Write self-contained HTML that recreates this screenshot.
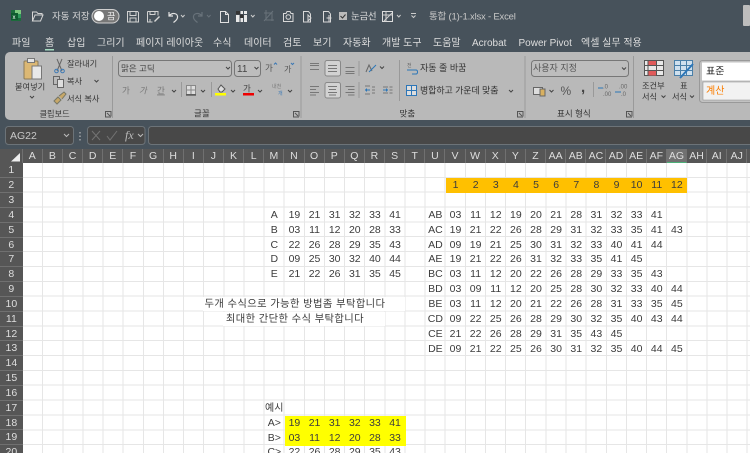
<!DOCTYPE html>
<html lang="ko"><head><meta charset="utf-8"><title>통합 (1)-1.xlsx - Excel</title>
<style>
html,body{margin:0;padding:0;width:750px;height:453px;overflow:hidden;background:#fff}
body{position:relative;font-family:"Liberation Sans","Noto Sans CJK KR",sans-serif}
#top{position:absolute;left:0;top:0;width:750px;height:149px;background:#47525b}
svg{position:absolute;left:0;top:0}
svg text{font-family:"Liberation Sans","Noto Sans CJK KR",sans-serif}
#grid{position:absolute;left:22.7px;top:163.3px;width:728px;height:290px;background-color:#fff;
background-image:repeating-linear-gradient(to right,transparent 0,transparent 19.13px,#e6e6e6 19.13px,#e6e6e6 20.13px),repeating-linear-gradient(to bottom,transparent 0,transparent 13.85px,#e6e6e6 13.85px,#e6e6e6 14.85px)}
.fill{position:absolute}
#ch{position:absolute;left:0;top:149px;width:750px;height:14.3px;background:#565656}
#ch span{position:absolute;top:0;width:19.13px;height:14.3px;line-height:14.5px;text-align:center;font-size:10.5px;color:#dedede;border-right:1px solid #707070}
#rh{position:absolute;left:0;top:163.3px;width:22.7px;height:290px;background:#565656;overflow:hidden}
#rh span{display:block;height:13.85px;border-bottom:1px solid #707070;line-height:14.5px;text-align:center;font-size:10.5px;color:#dedede}
.r{position:absolute;height:14.85px;line-height:15px;font-size:10.5px;color:#3c3c3c;white-space:nowrap}
.r span{display:inline-block;width:20.13px;text-align:center}
.t{position:absolute;height:14.85px;line-height:15px;font-size:10.3px;letter-spacing:.4px;color:#3c3c3c;white-space:nowrap}
</style></head><body>
<div id="top"></div>
<svg width="750" height="149" viewBox="0 0 750 149" fill="none" style="filter:blur(.25px)">
<!-- excel logo -->
<rect x="11" y="10" width="10" height="11" fill="#1d6b3c"/><rect x="15" y="10" width="6" height="4" fill="#7cc97e"/><rect x="15" y="14" width="6" height="4" fill="#2e9a5a"/><rect x="11" y="13" width="7" height="7" fill="#0f5c2e"/>
<text x="12.5" y="19" font-size="6" fill="#fff">x</text>
<!-- folder -->
<path d="M32.5 21V12h4l1.5 1.5h4V15M32.5 21h8l2.5-6h-8l-2.5 6z" stroke="#d5d5d5"/>
<text x="52" y="19.5" font-size="9.5" fill="#d8d8d8">자동 저장</text>
<rect x="92" y="9.5" width="27" height="13.5" rx="6.7" fill="#777" stroke="#cfcfcf"/><circle cx="99" cy="16" r="5" fill="#fff"/>
<text x="107" y="19.5" font-size="9" fill="#eee">끔</text>
<!-- save -->
<path d="M127.5 11.5h10l1 1v9.5h-11zM130 11.5v4h6v-4M130 22v-4h6v4" stroke="#d2d2d2"/>
<path d="M147.5 11.5h10.500v4M147.500 11.500v10.500h5M150 11.500v3h5v-3M150 22v-3" stroke="#d2d2d2"/><path d="M154 21l5-5 1 1-5 5z" fill="#d8d8d8"/>
<path d="M169 12v4h4M169 16c3-4 9-3 8.500 1.500 0 2-2 3.500-4 5" stroke="#e2e2e2" stroke-width="1.200"/>
<path d="M181 15l1.800 2 1.800-2" stroke="#ccc"/>
<path d="M202 12v4h-4M202 16c-3-4-9-3-8.500 1.500 0 2 2 3.500 4 5" stroke="#68727a" stroke-width="1.200"/><path d="M207 15l1.800 2 1.800-2" stroke="#68727a"/>
<path d="M220.500 11.500h5l3 3v8h-8zM225.500 11.500v3h3" stroke="#e0e0e0"/>
<rect x="236" y="11" width="11" height="11" fill="#e8e8e8"/><path d="M236 14.500h11M240 11v11M243.500 11v11" stroke="#47525b"/><rect x="236" y="11" width="4" height="3.500" fill="#333"/><rect x="240" y="14.500" width="3.500" height="3.500" fill="#333"/>
<path d="M251 15l1.800 2 1.800-2" stroke="#ccc"/>
<path d="M266 10v10h8M264 13h8v8M264 21l9-10" stroke="#68727a"/>
<path d="M283.500 13.500h2.500l1-2h3l1 2h2v8h-9.500z" stroke="#d8d8d8"/><circle cx="288.300" cy="17" r="2.300" stroke="#d8d8d8"/>
<path d="M303.500 11.500h5l2 2.500v8h-7z" stroke="#d8d8d8"/><path d="M308 15l3 3-3 3v-6z" stroke="#d8d8d8"/>
<path d="M323.500 11.500h5l2 2.500v8h-7z" stroke="#d8d8d8"/><path d="M329 15v7M326.500 18h5" stroke="#d8d8d8"/>
<rect x="339" y="12" width="8" height="8" fill="#bbb"/><path d="M340.500 16l2 2 3-3.500" stroke="#333"/>
<text x="351" y="19.500" font-size="9.500" fill="#dcdcdc" letter-spacing="-.3">눈금선</text>
<rect x="382.500" y="11.500" width="10" height="10" stroke="#ddd"/><path d="M382.500 15h10M386 11.500v10M384 21l8-8" stroke="#cfcfcf"/>
<path d="M397 15l1.800 2 1.800-2" stroke="#ccc"/><path d="M411 13.500h5M411.500 15.500l2 2 2-2" stroke="#ccc"/>
<text x="429" y="19.500" font-size="9.500" fill="#c8c8c8" letter-spacing="-.2">통합 (1)-1.xlsx  -  Excel</text>
<rect x="743" y="5" width="7" height="21" rx="1" fill="#bdbdbd"/>
<!-- tabs -->
<g font-size="10" fill="#dedede">
<text x="12" y="46">파일</text><text x="45" y="46">홈</text><text x="67" y="46">삽입</text><text x="97" y="46">그리기</text><text x="136" y="46">페이지 레이아웃</text><text x="213" y="46">수식</text><text x="244" y="46">데이터</text><text x="283" y="46">검토</text><text x="313" y="46">보기</text><text x="343" y="46">자동화</text><text x="382" y="46">개발 도구</text><text x="433" y="46">도움말</text><text x="472" y="46">Acrobat</text><text x="518.500" y="46">Power Pivot</text><text x="581" y="46">엑셀 실무 적용</text>
</g>
<rect x="45" y="49" width="9" height="1.500" fill="#a5dcc0"/>
<!-- ribbon -->
<rect x="5" y="52" width="760" height="68" rx="5" fill="#b9b9b9"/>
<g stroke="#9a9a9a"><path d="M112.500 56v62M301 56v62M525 56v62M633.500 56v62"/></g>
<!-- paste -->
<rect x="24" y="61" width="14" height="18" rx="1" fill="#dcb874" stroke="#8a7a5a"/><rect x="27.500" y="58.500" width="7" height="4" fill="#e4e4e4" stroke="#777"/><rect x="32" y="66" width="9.500" height="13" fill="#e8e8e8" stroke="#777"/>
<text x="15" y="89.500" font-size="8.200" fill="#333">붙여넣기</text><path d="M30 96l2 2 2-2" stroke="#444"/>
<path d="M57 59l5 12M62 59l-5 12" stroke="#666"/><circle cx="56.500" cy="71" r="1.800" stroke="#3a78b5"/><circle cx="62.500" cy="71" r="1.800" stroke="#3a78b5"/>
<text x="67" y="66.500" font-size="8.200" fill="#333">잘라내기</text>
<rect x="53.500" y="76.500" width="6" height="8" stroke="#666"/><rect x="57.500" y="79.500" width="6" height="8" fill="#ddd" stroke="#666"/>
<text x="67" y="84" font-size="8.200" fill="#333">복사</text><path d="M94.500 80l2 2 2-2" stroke="#444"/>
<path d="M54 101l4-4 3 3-4 4zM59 96l5-4 2 2-4 5" fill="#c8a868" stroke="#776"/>
<text x="67" y="101.500" font-size="8.200" fill="#333">서식 복사</text>
<text x="39.500" y="116.500" font-size="8.200" fill="#333">클립보드</text>
<path d="M105 111.500h6v5M105.500 111.500v5.500h5.500M107 113l3 3" stroke="#555"/>
<!-- font -->
<rect x="118.500" y="60.500" width="113" height="16" rx="3" fill="#bdbdbd" stroke="#777"/>
<text x="121" y="71.500" font-size="8.500" fill="#444">맑은 고딕</text><path d="M226 67l2 2 2-2" stroke="#444"/>
<rect x="234.500" y="60.500" width="26" height="16" rx="3" fill="#bdbdbd" stroke="#777"/><text x="237" y="72" font-size="10" fill="#444">11</text><path d="M254.500 67l2 2 2-2" stroke="#444"/>
<text x="265" y="71" font-size="8.500" fill="#555">가</text><path d="M274 64.500l1.500-1.500 1.500 1.500" stroke="#3a78b5"/>
<text x="284" y="72" font-size="8" fill="#555">가</text><path d="M291 63l1.500 1.500 1.500-1.500" stroke="#3a78b5"/>
<g font-size="8.500" fill="#777"><text x="122" y="93.500">가</text><text x="139" y="93.500" font-style="italic">가</text><text x="157" y="93.500" text-decoration="underline">간</text></g>
<path d="M172 90l2 2 2-2M201 90l2 2 2-2M231 90l2 2 2-2M258 90l2 2 2-2M288 90l2 2 2-2" stroke="#444"/>
<path d="M181.500 82v15M211.500 82v15" stroke="#999"/>
<rect x="186.500" y="85.500" width="9" height="9" fill="#ddd" stroke="#888"/><path d="M191 85.500v9M186.500 90h9" stroke="#888"/><path d="M186 95h10" stroke="#333"/>
<path d="M218 89l3-4 4 4-3 3h-2z" stroke="#555" fill="#ddd"/><rect x="215" y="93" width="11" height="2.500" fill="#ff0"/>
<text x="243" y="91.500" font-size="8.500" fill="#444">가</text><rect x="243" y="93" width="11" height="2.500" fill="#e00"/>
<text x="272" y="88" font-size="5" fill="#777">내천</text><text x="278" y="95" font-size="5" fill="#3a78b5">개</text>
<text x="194" y="116.500" font-size="8.500" fill="#333">글꼴</text>
<path d="M293 111.500h6v5M293.500 111.500v5.500h5.500M295 113l3 3" stroke="#555"/>
<!-- align -->
<rect x="325" y="60.500" width="15.500" height="15.500" rx="2" fill="#d2d2d2" stroke="#888"/><rect x="325" y="82.500" width="15.500" height="15.500" rx="2" fill="#d2d2d2" stroke="#888"/>
<g stroke="#777"><path d="M310 63.500h9M310 65.500h9M310 69.500h9"/><path d="M328 65.500h9M328 68.500h9M328 71.500h9"/><path d="M345.500 67.500h9M345.500 71.500h9M345.500 73.500h9"/>
<path d="M310 86.500h9M310 89.500h6M310 92.500h9M310 95h6"/><path d="M328 86.500h9M329 89.500h7M328 92.500h9M329 95h7"/><path d="M345.500 86.500h9M348 89.500h6.500M345.500 92.500h9M348 95h6.500"/>
<path d="M359 61v15M359 82v16M399.500 60v41" stroke="#999"/></g>
<path d="M366 72l3-7 3 6" stroke="#666"/><path d="M369 72l7-7" stroke="#2c76b8"/><path d="M380 66.500l2 2 2-2M509 90l2 2 2-2" stroke="#444"/>
<path d="M365 90h5" stroke="#2c76b8"/><path d="M365 90l2-2v4z" fill="#2c76b8"/><path d="M372 87h3M372 90h3M372 93h3M365 86h5M365 94h5M383 87h5M383 93h5" stroke="#777"/><path d="M383 90h5" stroke="#2c76b8"/><path d="M388 90l-2-2v4z" fill="#2c76b8"/><path d="M389.500 87h3M389.500 90h3M389.500 93h3" stroke="#777"/>
<text x="407" y="67" font-size="5" fill="#666">전</text><path d="M407 70h9c2 0 2 4 0 4h-4" stroke="#2c76b8"/>
<text x="420" y="71" font-size="9" fill="#333">자동 줄 바꿈</text>
<rect x="406.500" y="85.500" width="10" height="10" fill="#ddd" stroke="#2c76b8"/><path d="M406.500 90.500h10M411.500 85.500v10" stroke="#2c76b8"/>
<text x="420" y="93.500" font-size="9" fill="#333" letter-spacing="-.1">병합하고 가운데 맞춤</text>
<text x="399.500" y="116.500" font-size="8.500" fill="#333">맞춤</text>
<path d="M517 111.500h6v5M517.500 111.500v5.500h5.500M519 113l3 3M626 111.500h6v5M626.500 111.500v5.500h5.500M628 113l3 3" stroke="#555"/>
<!-- number -->
<rect x="531.500" y="60.500" width="97" height="16" rx="3" fill="#bdbdbd" stroke="#777"/><text x="533" y="71" font-size="9" fill="#555">사용자 지정</text><path d="M622 67.500l2 2 2-2" stroke="#444"/>
<rect x="533.500" y="87.500" width="9" height="7" fill="#ddd" stroke="#666"/><rect x="540" y="89" width="5" height="7" fill="#d8b060" stroke="#666"/>
<path d="M549.500 90l2 2 2-2" stroke="#444"/>
<text x="560.500" y="95" font-size="12" fill="#555">%</text><text x="581" y="92" font-size="15" font-weight="bold" fill="#444">,</text>
<path d="M593.500 82v15" stroke="#999"/>
<text x="603" y="88.500" font-size="6" fill="#666">.0</text><text x="603" y="96" font-size="6" fill="#666">.00</text><path d="M598 88h5" stroke="#2c76b8"/>
<text x="619" y="88.500" font-size="6" fill="#666">.00</text><text x="621" y="96" font-size="6" fill="#666">.0</text><path d="M615 92h6" stroke="#2c76b8"/>
<text x="557" y="116.500" font-size="8.500" fill="#333">표시 형식</text>
<!-- styles -->
<rect x="644.500" y="60.500" width="19" height="15" fill="#e8e8e8" stroke="#555"/><rect x="648" y="61" width="8.500" height="4.500" fill="#e05a5a"/><rect x="648" y="70.500" width="8.500" height="5" fill="#e05a5a"/><path d="M644.500 65.500h19M644.500 70.500h19M648 60.500v15M656.500 60.500v15" stroke="#555"/>
<rect x="674.500" y="60.500" width="18" height="15" fill="#cfe0ee" stroke="#4a7fa8"/><path d="M674.500 65.500h18M674.500 70.500h18M680.500 60.500v15M686.500 60.500v15" stroke="#4a7fa8"/><path d="M680 78l13-14" stroke="#2c76b8" stroke-width="2"/>
<g font-size="8.200" fill="#333"><text x="642" y="88.500">조건부</text><text x="642" y="99.500">서식</text><text x="680" y="88.500">표</text><text x="672" y="99.500">서식</text></g>
<path d="M661.500 95.500l2 2 2-2M690 95.500l2 2 2-2" stroke="#444"/>
<rect x="699.500" y="60.500" width="60" height="42" rx="3" fill="#c2c2c2" stroke="#999"/>
<rect x="702" y="62.500" width="50" height="18" fill="#fff"/><text x="706" y="74.500" font-size="10" fill="#222">표준</text>
<rect x="703" y="82" width="50" height="18" fill="#f2f2f2" stroke="#888" stroke-width=".5"/><text x="706" y="94" font-size="10" fill="#fa7d00">계산</text>
<!-- formula bar -->
<rect x="5.500" y="126.500" width="68" height="18" rx="3" fill="#484848" stroke="#6c7378"/>
<text x="10" y="139" font-size="10.500" fill="#c8c8c8">AG22</text><path d="M64 134l2.500 2.500 2.500-2.500" stroke="#bbb"/>
<path d="M80 132v1.500M80 135.500v1.500M80 139v1.500" stroke="#ccc"/>
<rect x="87.500" y="126.500" width="57.500" height="18" rx="3" fill="#484848" stroke="#6c7378"/>
<path d="M92 131l8 9M100 131l-8 9M107 136l3 4 7-9" stroke="#737373"/>
<text x="125" y="139" font-size="12" font-style="italic" fill="#bbb" style="font-family:'Liberation Serif',serif">fx</text><path d="M138 134l2.500 2.500 2.500-2.500" stroke="#bbb"/>
<rect x="148.500" y="126.500" width="610" height="18" rx="3" fill="#484848" stroke="#6c7378"/>
</svg>

<div id="ch">
<span style="left:0;width:21.7px;background:#565656"></span>
<span style="left:22.7px">A</span><span style="left:42.83px">B</span><span style="left:62.96px">C</span><span style="left:83.09px">D</span><span style="left:103.22px">E</span><span style="left:123.35px">F</span><span style="left:143.48px">G</span><span style="left:163.61px">H</span><span style="left:183.74px">I</span><span style="left:203.87px">J</span><span style="left:224px">K</span><span style="left:244.13px">L</span><span style="left:264.26px">M</span><span style="left:284.39px">N</span><span style="left:304.52px">O</span><span style="left:324.65px">P</span><span style="left:344.78px">Q</span><span style="left:364.91px">R</span><span style="left:385.04px">S</span><span style="left:405.17px">T</span><span style="left:425.3px">U</span><span style="left:445.43px">V</span><span style="left:465.56px">W</span><span style="left:485.69px">X</span><span style="left:505.82px">Y</span><span style="left:525.95px">Z</span><span style="left:546.08px">AA</span><span style="left:566.21px">AB</span><span style="left:586.34px">AC</span><span style="left:606.47px">AD</span><span style="left:626.6px">AE</span><span style="left:646.73px">AF</span><span style="left:666.86px;background:#717171;height:13.3px;border-bottom:1px solid #4caf78">AG</span><span style="left:686.99px">AH</span><span style="left:707.12px">AI</span><span style="left:727.25px">AJ</span>
</div>
<svg width="23" height="15" viewBox="0 0 23 15" style="top:149px"><path d="M20 12.500H11L20 4z" fill="#eee"/></svg>
<div id="rh"><span>1</span><span>2</span><span>3</span><span>4</span><span>5</span><span>6</span><span>7</span><span>8</span><span>9</span><span>10</span><span>11</span><span>12</span><span>13</span><span>14</span><span>15</span><span>16</span><span>17</span><span>18</span><span>19</span><span>20</span></div>
<div id="grid"></div>
<div class="fill" style="left:446px;top:178.3px;width:241.300px;height:15px;background:#ffc000"></div>
<div class="fill" style="left:285px;top:415.700px;width:121px;height:30px;background:#ffff00"></div>
<div class="fill" style="left:203px;top:296.95px;width:202px;height:13.85px;background:#fff"></div>
<div class="fill" style="left:223px;top:311.8px;width:162px;height:13.85px;background:#fff"></div>

<div class="r" style="left:445.43px;top:178.15px"><span>1</span><span>2</span><span>3</span><span>4</span><span>5</span><span>6</span><span>7</span><span>8</span><span>9</span><span>10</span><span>11</span><span>12</span></div>

<div class="r" style="left:264.26px;top:207.85px"><span>A</span><span>19</span><span>21</span><span>31</span><span>32</span><span>33</span><span>41</span></div>
<div class="r" style="left:264.26px;top:222.7px"><span>B</span><span>03</span><span>11</span><span>12</span><span>20</span><span>28</span><span>33</span></div>
<div class="r" style="left:264.26px;top:237.55px"><span>C</span><span>22</span><span>26</span><span>28</span><span>29</span><span>35</span><span>43</span></div>
<div class="r" style="left:264.26px;top:252.4px"><span>D</span><span>09</span><span>25</span><span>30</span><span>32</span><span>40</span><span>44</span></div>
<div class="r" style="left:264.26px;top:267.25px"><span>E</span><span>21</span><span>22</span><span>26</span><span>31</span><span>35</span><span>45</span></div>

<div class="r" style="left:425.3px;top:207.85px"><span>AB</span><span>03</span><span>11</span><span>12</span><span>19</span><span>20</span><span>21</span><span>28</span><span>31</span><span>32</span><span>33</span><span>41</span></div>
<div class="r" style="left:425.3px;top:222.7px"><span>AC</span><span>19</span><span>21</span><span>22</span><span>26</span><span>28</span><span>29</span><span>31</span><span>32</span><span>33</span><span>35</span><span>41</span><span>43</span></div>
<div class="r" style="left:425.3px;top:237.55px"><span>AD</span><span>09</span><span>19</span><span>21</span><span>25</span><span>30</span><span>31</span><span>32</span><span>33</span><span>40</span><span>41</span><span>44</span></div>
<div class="r" style="left:425.3px;top:252.4px"><span>AE</span><span>19</span><span>21</span><span>22</span><span>26</span><span>31</span><span>32</span><span>33</span><span>35</span><span>41</span><span>45</span></div>
<div class="r" style="left:425.3px;top:267.25px"><span>BC</span><span>03</span><span>11</span><span>12</span><span>20</span><span>22</span><span>26</span><span>28</span><span>29</span><span>33</span><span>35</span><span>43</span></div>
<div class="r" style="left:425.3px;top:282.1px"><span>BD</span><span>03</span><span>09</span><span>11</span><span>12</span><span>20</span><span>25</span><span>28</span><span>30</span><span>32</span><span>33</span><span>40</span><span>44</span></div>
<div class="r" style="left:425.3px;top:296.95px"><span>BE</span><span>03</span><span>11</span><span>12</span><span>20</span><span>21</span><span>22</span><span>26</span><span>28</span><span>31</span><span>33</span><span>35</span><span>45</span></div>
<div class="r" style="left:425.3px;top:311.8px"><span>CD</span><span>09</span><span>22</span><span>25</span><span>26</span><span>28</span><span>29</span><span>30</span><span>32</span><span>35</span><span>40</span><span>43</span><span>44</span></div>
<div class="r" style="left:425.3px;top:326.65px"><span>CE</span><span>21</span><span>22</span><span>26</span><span>28</span><span>29</span><span>31</span><span>35</span><span>43</span><span>45</span></div>
<div class="r" style="left:425.3px;top:341.5px"><span>DE</span><span>09</span><span>21</span><span>22</span><span>25</span><span>26</span><span>30</span><span>31</span><span>32</span><span>35</span><span>40</span><span>44</span><span>45</span></div>

<div class="t" style="left:195px;width:200px;text-align:center;top:296.95px">두개 수식으로 가능한 방법좀 부탁합니다</div>
<div class="t" style="left:195px;width:200px;text-align:center;top:311.8px">최대한 간단한 수식 부탁합니다</div>
<div class="t" style="left:265px;top:400.9px;font-size:10px;letter-spacing:0">예시</div>

<div class="r" style="left:264.26px;top:415.75px"><span>A&gt;</span><span>19</span><span>21</span><span>31</span><span>32</span><span>33</span><span>41</span></div>
<div class="r" style="left:264.26px;top:430.6px"><span>B&gt;</span><span>03</span><span>11</span><span>12</span><span>20</span><span>28</span><span>33</span></div>
<div class="r" style="left:264.26px;top:445.45px"><span>C&gt;</span><span>22</span><span>26</span><span>28</span><span>29</span><span>35</span><span>43</span></div>
</body></html>
